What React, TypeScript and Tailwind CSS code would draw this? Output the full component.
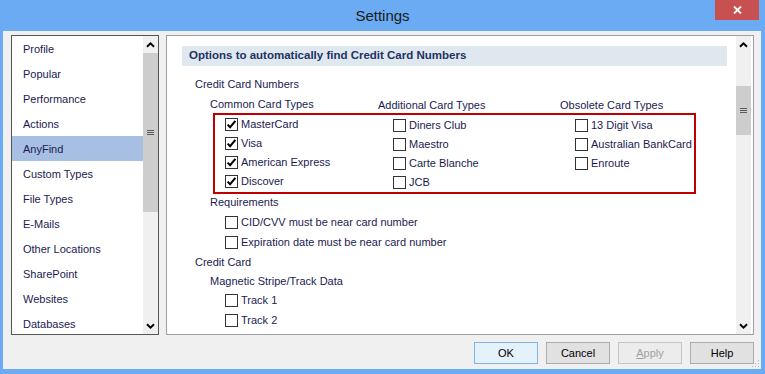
import React from "react";

const navItems = [
  "Profile",
  "Popular",
  "Performance",
  "Actions",
  "AnyFind",
  "Custom Types",
  "File Types",
  "E-Mails",
  "Other Locations",
  "SharePoint",
  "Websites",
  "Databases",
];

const commonTypes = [
  { label: "MasterCard", checked: true },
  { label: "Visa", checked: true },
  { label: "American Express", checked: true },
  { label: "Discover", checked: true },
];
const additionalTypes = ["Diners Club", "Maestro", "Carte Blanche", "JCB"];
const obsoleteTypes = ["13 Digit Visa", "Australian BankCard", "Enroute"];

function Chevron({ down }: { down?: boolean }) {
  return (
    <svg width="9" height="6" viewBox="0 0 9 6">
      <path
        d={down ? "M1 1.2 L4.5 4.6 L8 1.2" : "M1 4.8 L4.5 1.4 L8 4.8"}
        stroke="#000"
        strokeWidth="1.9"
        fill="none"
      />
    </svg>
  );
}

function Grip() {
  return (
    <svg width="7" height="6" viewBox="0 0 7 6">
      <path d="M0 0.5 H7 M0 2.5 H7 M0 4.5 H7" stroke="#5a5a5a" strokeWidth="1" />
    </svg>
  );
}

function Scrollbar({ gap, thumb, className = "" }: { gap: string; thumb: string; className?: string }) {
  return (
    <div className={`w-[15px] bg-[#f0f0f0] flex flex-col shrink-0 ${className}`}>
      <div className="h-[17px] flex items-center justify-center">
        <Chevron />
      </div>
      <div className={gap} />
      <div className={`${thumb} bg-[#cdcdcd] flex items-center justify-center`}>
        <Grip />
      </div>
      <div className="flex-1" />
      <div className="h-[17px] flex items-center justify-center">
        <Chevron down />
      </div>
    </div>
  );
}

function Checkbox({ checked }: { checked?: boolean }) {
  return (
    <span className="w-[13px] h-[13px] border border-[#333333] bg-white flex items-center justify-center shrink-0">
      {checked && (
        <svg width="11" height="11" viewBox="0 0 11 11">
          <path d="M1.6 5.6 L4.1 8.2 L9.4 1.8" stroke="#000" strokeWidth="2" fill="none" />
        </svg>
      )}
    </span>
  );
}

function CheckRow({ label, checked, tall }: { label: string; checked?: boolean; tall?: boolean }) {
  return (
    <div className={`flex items-center ${tall ? "h-[20px]" : "h-[19px]"}`}>
      <Checkbox checked={checked} />
      <span className="ml-[3px] whitespace-nowrap">{label}</span>
    </div>
  );
}

function DialogButton({ children, variant }: { children: React.ReactNode; variant?: "default" | "disabled" }) {
  const look =
    variant === "default"
      ? "bg-[#e5f1fb] border-[#7eb4ea] text-black"
      : variant === "disabled"
      ? "bg-[#ececec] border-[#c4c4c4] text-[#a0a0a0]"
      : "bg-[#e1e1e1] border-[#adadad] text-black";
  return (
    <div className={`w-[64px] h-[22px] border flex items-center justify-center ${look}`}>{children}</div>
  );
}

export default function App() {
  return (
    <div className="w-[765px] h-[374px] bg-[#6aabf4] flex flex-col overflow-hidden font-['Liberation_Sans',Arial,sans-serif] text-[11px] text-[#1b1b50]">
      {/* Title bar */}
      <div className="h-[31px] grid grid-cols-[1fr_auto_1fr] shrink-0">
        <div />
        <div className="pt-[7px] text-[15px] leading-[17px] text-[#1a1a1a]">Settings</div>
        <div className="flex justify-end pr-[6px]">
          <div className="w-[44px] h-[20px] bg-[#c75050] flex items-center justify-center">
            <svg width="9" height="8" viewBox="0 0 9 8">
              <path d="M1 0.5 L8 7.5 M8 0.5 L1 7.5" stroke="#fff" strokeWidth="1.8" />
            </svg>
          </div>
        </div>
      </div>

      {/* Client area */}
      <div className="relative flex-1 ml-[3px] mr-[4px] mb-[5px] bg-[#f0f0f0] flex flex-col">
        <div className="flex gap-[7px] pt-[4px] pl-[8px] pr-[7px]">
          {/* Category list */}
          <div className="w-[148px] h-[300px] border border-[#555555] bg-white flex">
            <div className="flex-1 overflow-hidden">
              {navItems.map((item) => (
                <div
                  key={item}
                  className={`h-[25px] shrink-0 flex items-center pl-[11px] pt-[2px] ${
                    item === "AnyFind" ? "bg-[#a7bfe3]" : ""
                  }`}
                >
                  {item}
                </div>
              ))}
            </div>
            <Scrollbar gap="h-0" thumb="h-[159px]" />
          </div>

          {/* Options panel */}
          <div className="w-[588px] h-[300px] border border-[#a0a0a0] bg-white flex">
            <div className="flex-1 overflow-hidden">
              <div className="ml-[15px] mt-[10px] h-[20px] w-[545px] bg-[#dfe8ef] pl-[7px] flex items-center font-bold text-[11.5px] text-[#1e3264]">
                Options to automatically find Credit Card Numbers
              </div>

              <div className="pl-[28px]">
                <div className="mt-[8px] h-[20px] flex items-center">Credit Card Numbers</div>

                <div className="pl-[15px] h-[19px] grid grid-cols-[168px_182px_1fr]">
                  <div className="flex items-center">Common Card Types</div>
                  <div className="flex items-center pt-[3px]">Additional Card Types</div>
                  <div className="flex items-center pt-[3px]">Obsolete Card Types</div>
                </div>

                <div className="ml-[18px] w-[483px] border-2 border-[#c00000] pl-[10px] grid grid-cols-[168px_182px_1fr]">
                  <div>
                    {commonTypes.map((t) => (
                      <CheckRow key={t.label} label={t.label} checked={t.checked} />
                    ))}
                  </div>
                  <div className="pt-[1px]">
                    {additionalTypes.map((t) => (
                      <CheckRow key={t} label={t} />
                    ))}
                  </div>
                  <div className="pt-[1px]">
                    {obsoleteTypes.map((t) => (
                      <CheckRow key={t} label={t} />
                    ))}
                  </div>
                </div>

                <div className="ml-[15px] mt-[-1px] h-[19px] flex items-center">Requirements</div>
                <div className="ml-[30px]">
                  <CheckRow label="CID/CVV must be near card number" tall />
                  <CheckRow label="Expiration date must be near card number" tall />
                </div>

                <div className="h-[20px] flex items-center">Credit Card</div>
                <div className="ml-[15px] h-[18px] flex items-center">Magnetic Stripe/Track Data</div>
                <div className="ml-[30px]">
                  <CheckRow label="Track 1" tall />
                  <CheckRow label="Track 2" tall />
                </div>
              </div>
            </div>
            <Scrollbar gap="h-[33px]" thumb="h-[49px]" className="mr-[2px]" />
          </div>
        </div>

        {/* Dialog buttons */}
        <div className="mt-[7px] pr-[7px] flex justify-end gap-[8px]">
          <DialogButton variant="default">OK</DialogButton>
          <DialogButton>Cancel</DialogButton>
          <DialogButton variant="disabled">
            <span>
              <span className="underline">A</span>pply
            </span>
          </DialogButton>
          <DialogButton>Help</DialogButton>
        </div>

        {/* size grip */}
        <svg className="absolute right-[1px] bottom-[1px]" width="10" height="10" viewBox="0 0 10 10">
          <g fill="#b4b4b4">
            <rect x="8" y="2" width="1" height="1" />
            <rect x="5" y="5" width="1" height="1" />
            <rect x="8" y="5" width="1" height="1" />
            <rect x="2" y="8" width="1" height="1" />
            <rect x="5" y="8" width="1" height="1" />
            <rect x="8" y="8" width="1" height="1" />
          </g>
        </svg>
      </div>
    </div>
  );
}
